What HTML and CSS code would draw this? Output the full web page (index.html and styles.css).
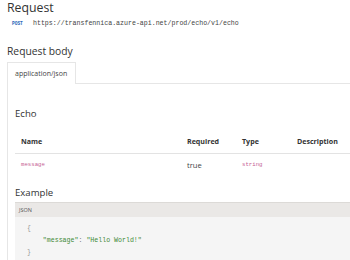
FILE: index.html
```html
<!DOCTYPE html>
<html>
<head>
<meta charset="utf-8">
<link rel="stylesheet" href="styles.css">
</head>
<body>
<h2 class="title">Request</h2>
<div class="url-row"><span class="method">POST</span><span class="url">https://transfennica.azure-api.net/prod/echo/v1/echo</span></div>
<h3 class="body-title">Request body</h3>
<div class="tabs">
  <div class="tab-bar">
    <div class="tab">application/json</div>
    <div class="tab-fill"></div>
  </div>
  <div class="panel">
    <h4 class="sub">Echo</h4>
    <div class="row head">
      <div>Name</div><div>Required</div><div>Type</div><div>Description</div>
    </div>
    <div class="row">
      <div class="code-pink">message</div><div>true</div><div class="code-pink">string</div><div></div>
    </div>
    <h4 class="sub example">Example</h4>
    <div class="code-head">JSON</div>
<pre class="code"><span class="brace">{</span>
    <span class="str">"message"</span>: <span class="str">"Hello World!"</span>
<span class="brace">}</span></pre>
  </div>
</div>
</body>
</html>
```
FILE: styles.css
```css
html { overflow: hidden; height: 260px; }
html, body { margin: 0; padding: 0; background: #fff; }
body {
  font-family: "Open Sans", "Noto Sans", sans-serif;
  color: #333;
  padding: 0 0 0 7px;
  overflow: hidden;
  width: 343px;
  height: 260px;
}
.title {
  margin: 0;
  font-size: 12.3px;
  line-height: 16px;
  font-weight: 400;
  color: #333;
}
.url-row {
  margin-top: 3px;
  height: 10px;
  line-height: 10px;
  display: flex;
  align-items: center;
  padding-left: 5px;
  white-space: nowrap;
}
.method {
  font-family: "Liberation Mono", monospace;
  font-size: 4.5px;
  font-weight: 700;
  color: #2a66b8;
  width: 21px;
}
.url {
  font-family: "Liberation Mono", monospace;
  font-size: 6.6px;
  color: #444;
}
.body-title {
  margin: 15px 0 0;
  font-size: 10.3px;
  line-height: 14px;
  font-weight: 400;
  color: #333;
}
.tabs {
  margin-top: 4px;
  border-left: 1px solid #e6e6e6;
}
.tab-bar { display: flex; height: 22px; }
.tab {
  width: 60px;
  padding-left: 7px;
  border-top: 1px solid #e6e6e6;
  border-right: 1px solid #e6e6e6;
  font-size: 7px;
  line-height: 21px;
  color: #444;
  white-space: nowrap;
}
.tab-fill { flex: 1; border-bottom: 1px solid #e6e6e6; }
.panel { padding-left: 7px; }
.sub {
  margin: 0;
  font-size: 9.6px;
  line-height: 14px;
  font-weight: 400;
  color: #333;
}
.panel .sub:first-child { padding-top: 23px; }
.row {
  display: grid;
  grid-template-columns: 166px 55px 55px auto;
  padding-left: 6px;
  white-space: nowrap;
  font-size: 7.6px;
  line-height: 10px;
}
.row.head {
  padding-top: 15px;
  padding-bottom: 7px;
  border-bottom: 1px solid #e3e3e3;
  font-weight: 700;
  font-size: 7.1px;
  color: #333;
}
.row:not(.head) { padding-top: 6px; color: #444; }
.code-pink {
  font-family: "Liberation Mono", monospace;
  font-size: 5.7px;
  color: #c55d93;
}
.example { margin-top: 16px; }
.code-head {
  margin-top: 2px;
  height: 14px;
  border-top: 1px solid #dcdad7;
  background: #eae8e6;
  padding-left: 4px;
  font-size: 5.5px;
  line-height: 14px;
  color: #555;
}
.code {
  margin: 0;
  background: #f5f5f5;
  padding: 6px 0 10px 12px;
  font-family: "Liberation Mono", monospace;
  font-size: 6.6px;
  line-height: 12px;
  color: #777;
}
.brace { color: #999; }
.str { color: #3f8a35; }
```
